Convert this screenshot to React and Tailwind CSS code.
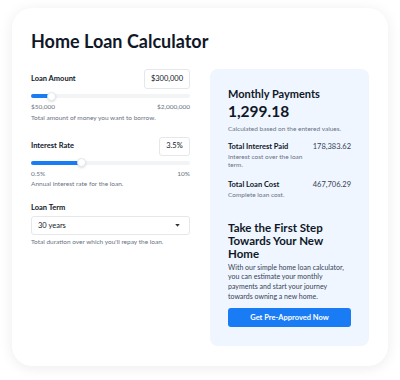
import { useState } from 'react';

const Slider = ({ pct }) => (
    <div className="relative h-[10px] flex items-center">
        <div className="w-full h-[4px] rounded-full bg-gray-100">
            <div className="h-full rounded-full bg-[#1a7cf5]" style={{ width: `${pct}%` }} />
        </div>
        <div
            className="absolute w-[9px] h-[9px] rounded-full bg-white border border-gray-200 shadow-sm"
            style={{ left: `calc(${pct}% - 4.5px)` }}
        />
    </div>
);

const App = () => {
    const [term] = useState('30 years');

    return (
        <div className="w-[400px] h-[380px] bg-white pt-[8px] px-[12px] font-['Lato',sans-serif] text-gray-900">
            <div className="w-[376px] h-[358px] rounded-[20px] bg-white shadow-[0_2px_14px_rgba(0,0,0,0.08)] px-[19px] pt-[20px]">
                <h1 className="text-[18px] leading-[26px] font-bold">Home Loan Calculator</h1>

                <div className="grid grid-cols-2 gap-[20px] mt-[15px]">
                    {/* inputs */}
                    <div className="flex flex-col">
                        <div className="flex items-center justify-between">
                            <label className="text-[7.5px] font-bold">Loan Amount</label>
                            <div className="w-[46px] h-[20px] border border-gray-200 rounded-[3px] flex items-center justify-center text-[7.5px]">$300,000</div>
                        </div>
                        <div className="mt-[2px]"><Slider pct={13} /></div>
                        <div className="flex justify-between text-[6.5px] text-gray-500 mt-[1px]">
                            <span>$50,000</span>
                            <span>$2,000,000</span>
                        </div>
                        <p className="text-[6.5px] text-gray-500 mt-[1px]">Total amount of money you want to borrow.</p>

                        <div className="flex items-center justify-between mt-[14px]">
                            <label className="text-[7.5px] font-bold">Interest Rate</label>
                            <div className="w-[31px] h-[19px] border border-gray-200 rounded-[3px] flex items-center justify-center text-[7.5px]">3.5%</div>
                        </div>
                        <div className="mt-[2px]"><Slider pct={31.5} /></div>
                        <div className="flex justify-between text-[6.5px] text-gray-500 mt-[1px]">
                            <span>0.5%</span>
                            <span>10%</span>
                        </div>
                        <p className="text-[6.5px] text-gray-500 mt-[1px]">Annual interest rate for the loan.</p>

                        <label className="text-[7.5px] font-bold mt-[13px]">Loan Term</label>
                        <div className="mt-[3px] h-[19px] border border-gray-200 rounded-[3px] flex items-center justify-between pl-[6px] pr-[9px] text-[7.5px]">
                            <span>{term}</span>
                            <svg width="5" height="3" viewBox="0 0 6 4"><path d="M0 0h6L3 3.5z" fill="#333" /></svg>
                        </div>
                        <p className="text-[6.5px] text-gray-500 mt-[2px]">Total duration over which you'll repay the loan.</p>
                    </div>

                    {/* results */}
                    <div className="h-[277px] rounded-[8px] bg-[#eff6ff] px-[18px] pt-[18px]">
                        <h2 className="text-[11px] leading-[14px] font-bold">Monthly Payments</h2>
                        <p className="text-[15.5px] leading-[20px] font-bold">1,299.18</p>
                        <p className="text-[6.5px] text-gray-500 mt-[3px]">Calculated based on the entered values.</p>

                        <div className="flex justify-between mt-[8px]">
                            <div className="w-[75px]">
                                <p className="text-[7.5px] font-bold leading-[10px]">Total Interest Paid</p>
                                <p className="text-[6.5px] text-gray-500 leading-[8px] mt-[1px]">Interest cost over the loan term.</p>
                            </div>
                            <span className="text-[7.5px] leading-[10px] text-gray-700">178,383.62</span>
                        </div>
                        <div className="flex justify-between mt-[11px]">
                            <div>
                                <p className="text-[7.5px] font-bold leading-[10px]">Total Loan Cost</p>
                                <p className="text-[6.5px] text-gray-500 leading-[8px] mt-[1px]">Complete loan cost.</p>
                            </div>
                            <span className="text-[7.5px] leading-[10px] text-gray-700">467,706.29</span>
                        </div>

                        <h3 className="text-[11.5px] leading-[13px] font-bold mt-[22px]">Take the First Step Towards Your New Home</h3>
                        <p className="text-[7px] leading-[9.7px] text-gray-700 mt-[3px]">With our simple home loan calculator, you can estimate your monthly payments and start your journey towards owning a new home.</p>
                        <button className="w-full h-[19px] mt-[6px] rounded-[3px] bg-[#1a7cf5] text-white text-[7.5px] font-bold">Get Pre-Approved Now</button>
                    </div>
                </div>
            </div>
        </div>
    );
};
export default App;
